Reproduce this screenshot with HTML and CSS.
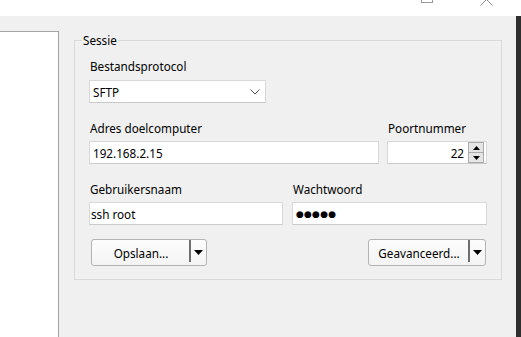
FILE: index.html
```html
<!DOCTYPE html>
<html lang="nl">
<head>
<meta charset="utf-8">
<title>Sessie</title>
<link rel="stylesheet" href="styles.css">
</head>
<body>
<div class="window">
  <div class="titlebar">
    <svg class="cap-max" width="12" height="16" viewBox="0 0 12 16"><rect x="0.5" y="-9.5" width="11" height="12" fill="none" stroke="#9a9a9a" stroke-width="1"/></svg>
    <svg class="cap-close" width="13" height="16" viewBox="0 0 13 16"><path d="M0.5 5.5 L6.5 -0.5 L12.5 5.5" fill="none" stroke="#8c8c8c" stroke-width="1"/></svg>
  </div>
  <div class="main">
    <div class="leftpanel"></div>
    <div class="content">
      <fieldset class="group">
        <legend class="group-title">Sessie</legend>
        <div class="group-body">
          <div class="row">
            <div class="field w-proto">
              <div class="label">Bestandsprotocol</div>
              <div class="combo">
                <span class="edit-text">SFTP</span>
                <svg class="chev" width="10" height="6" viewBox="0 0 10 6"><path d="M0.5 0.5 L5 5 L9.5 0.5" fill="none" stroke="#555" stroke-width="1"/></svg>
              </div>
            </div>
          </div>
          <div class="row row-gap8 mt17">
            <div class="field w-host">
              <div class="label">Adres doelcomputer</div>
              <div class="edit"><span class="edit-text">192.168.2.15</span></div>
            </div>
            <div class="field w-port">
              <div class="label">Poortnummer</div>
              <div class="edit spin">
                <span class="edit-text num">22</span>
                <div class="spin-btns">
                  <div class="spin-btn"><svg width="7" height="4" viewBox="0 0 7 4"><path d="M0 4 L3.5 0 L7 4 Z" fill="#000"/></svg></div>
                  <div class="spin-btn"><svg width="7" height="4" viewBox="0 0 7 4"><path d="M0 0 L3.5 4 L7 0 Z" fill="#000"/></svg></div>
                </div>
              </div>
            </div>
          </div>
          <div class="row row-gap9 mt17">
            <div class="field w-user">
              <div class="label">Gebruikersnaam</div>
              <div class="edit"><span class="edit-text tight">ssh root</span></div>
            </div>
            <div class="field w-pass">
              <div class="label">Wachtwoord</div>
              <div class="edit"><span class="edit-text dots">●●●●●</span></div>
            </div>
          </div>
          <div class="row buttons">
            <div class="splitbtn w-save">
              <span class="btn-text">Opslaan...</span>
              <span class="btn-div"></span>
              <span class="btn-arrow"><svg width="9" height="5" viewBox="0 0 9 5"><path d="M0 0 L9 0 L4.5 5 Z" fill="#000"/></svg></span>
            </div>
            <div class="splitbtn w-adv">
              <span class="btn-text">Geavanceerd...</span>
              <span class="btn-div"></span>
              <span class="btn-arrow"><svg width="9" height="5" viewBox="0 0 9 5"><path d="M0 0 L9 0 L4.5 5 Z" fill="#000"/></svg></span>
            </div>
          </div>
        </div>
      </fieldset>
    </div>
    <div class="edge"></div>
  </div>
</div>
</body>
</html>
```

FILE: styles.css
```css
* { box-sizing: border-box; }
html, body { margin: 0; padding: 0; }
body {
  width: 521px;
  height: 337px;
  overflow: hidden;
  background: #f0f0f0;
  font-family: "Noto Sans", "Open Sans", sans-serif;
  font-size: 11.7px;
  line-height: 16px;
  color: #000;
}
.window { display: flex; flex-direction: column; height: 337px; }
.titlebar {
  height: 16px;
  background: #fff;
  display: flex;
  justify-content: flex-end;
  align-items: flex-start;
  gap: 47px;
  padding-right: 28px;
  overflow: hidden;
}
.titlebar svg { display: block; }
.main { flex: 1; display: flex; }
.leftpanel {
  width: 59px;
  margin-top: 15px;
  background: #fff;
  border-top: 1px solid #a3a3a3;
  border-right: 1px solid #a3a3a3;
}
.content { flex: 1; padding-top: 16px; padding-left: 15px; }
.edge { width: 5px; background: #2e2e2e; }

.group {
  margin: 0;
  padding: 0;
  width: 428px;
  min-width: 0;
  border: 1px solid #d9d9d9;
}
.group-title {
  margin-left: 7px;
  padding: 0 1px;
  line-height: 16px;
}
.group-body { padding: 10px 14px 13px 14px; }

.row { display: flex; }
.row-gap8 { gap: 8px; }
.row-gap9 { gap: 9px; }
.mt17 { margin-top: 17px; }
.field { display: flex; flex-direction: column; }
.label { padding-left: 1px; margin-bottom: 5px; height: 16px; white-space: nowrap; }
.w-proto .label { margin-bottom: 6px; }
.w-proto { width: 177px; }
.w-host { width: 290px; }
.w-port { width: 100px; }
.w-user { width: 194px; }
.w-pass { width: 195px; }

.edit, .combo {
  height: 23px;
  background: #fff;
  border: 1px solid #d8d8d8;
  border-bottom-color: #cacaca;
  display: flex;
  align-items: center;
}
.edit-text { padding-left: 3px; white-space: nowrap; }
.edit-text.tight { padding-left: 1px; }
.combo { justify-content: space-between; padding-right: 5px; }
.chev { display: block; margin-top: 1px; }

.dots {
  font-family: "DejaVu Sans", sans-serif;
  font-size: 9px;
  letter-spacing: 0.2px;
}
.spin { padding-right: 2px; }
.spin .num { flex: 1; text-align: right; padding-right: 4px; }
.spin-btns {
  width: 16px;
  height: 21px;
  display: flex;
  flex-direction: column;
}
.spin-btn {
  flex: 1;
  background: #e5e5e5;
  border: 1px solid #ababab;
  display: flex;
  align-items: center;
  justify-content: center;
}
.spin-btn + .spin-btn { border-top: none; }
.spin-btn svg { display: block; }

.buttons {
  margin-top: 14px;
  justify-content: space-between;
  padding-left: 2px;
  padding-right: 1px;
}
.splitbtn {
  height: 27px;
  border: 1px solid #b3b3b3;
  border-radius: 3px;
  background: linear-gradient(#fcfcfc, #f4f4f4);
  display: flex;
  align-items: stretch;
}
.w-save { width: 116px; }
.w-adv { width: 118px; }
.btn-text {
  flex: 1;
  display: flex;
  align-items: center;
  justify-content: center;
  white-space: nowrap;
  padding-left: 1px;
}
.btn-div {
  width: 2px;
  height: 22px;
  background: #6e6e6e;
}
.btn-arrow {
  width: 15px;
  display: flex;
  align-items: center;
  justify-content: center;
}
.btn-arrow svg { display: block; }
```
